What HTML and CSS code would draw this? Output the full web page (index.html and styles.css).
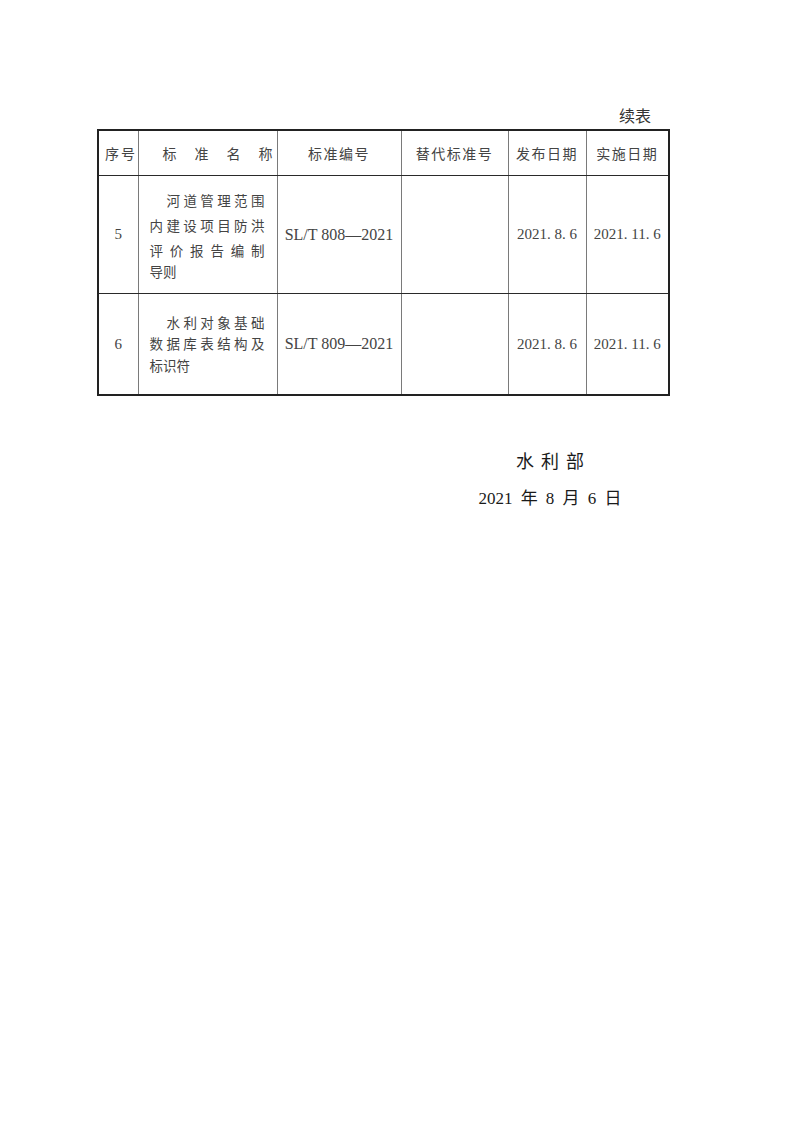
FILE: index.html
```html
<!DOCTYPE html>
<html lang="zh-CN">
<head>
<meta charset="utf-8">
<title>续表</title>
<link rel="stylesheet" href="styles.css">
</head>
<body>
<div class="page">
  <div class="caption">续表</div>
  <table class="std">
    <colgroup>
      <col class="c1"><col class="c2"><col class="c3"><col class="c4"><col class="c5"><col class="c6">
    </colgroup>
    <tr class="head">
      <td class="h-no">序号</td>
      <td class="h-name">标准名称</td>
      <td class="h">标准编号</td>
      <td class="h">替代标准号</td>
      <td class="h">发布日期</td>
      <td class="h">实施日期</td>
    </tr>
    <tr class="r5">
      <td class="num">5</td>
      <td class="name">
        <span class="ln j first tall">河道管理范围</span>
        <span class="ln j tall">内建设项目防洪</span>
        <span class="ln j tall">评价报告编制</span>
        <span class="ln last">导则</span>
      </td>
      <td class="code">SL/T 808—2021</td>
      <td></td>
      <td class="date">2021. 8. 6</td>
      <td class="date">2021. 11. 6</td>
    </tr>
    <tr class="r6">
      <td class="num">6</td>
      <td class="name">
        <span class="ln j first">水利对象基础</span>
        <span class="ln j">数据库表结构及</span>
        <span class="ln">标识符</span>
      </td>
      <td class="code">SL/T 809—2021</td>
      <td></td>
      <td class="date">2021. 8. 6</td>
      <td class="date">2021. 11. 6</td>
    </tr>
  </table>
  <div class="sign">
    <div class="org">水利部</div>
    <div class="when">2021 年 8 月 6 日</div>
  </div>
</div>
</body>
</html>
```

FILE: styles.css
```css
html, body {
  margin: 0;
  padding: 0;
  background: #ffffff;
}

body {
  color: #222;
  font-family: "Liberation Serif", "Noto Sans CJK SC", serif;
}

.page {
  padding: 105px 0 0 97px;
  width: 571px;
}

.caption {
  font-size: 16px;
  line-height: 20px;
  text-align: right;
  padding-right: 17px;
  margin-bottom: 4px;
  font-family: "Noto Sans CJK SC", sans-serif;
  color: #333;
}

.std {
  border-collapse: collapse;
  table-layout: fixed;
  width: 571px;
  border: 2px solid #222;
}

.c1 { width: 40px; }
.c2 { width: 139px; }
.c3 { width: 124px; }
.c4 { width: 107px; }
.c5 { width: 78px; }
.c6 { width: 83px; }

.std td {
  border-left: 1px solid #7a7a7a;
  border-right: 1px solid #7a7a7a;
  border-top: 1px solid #2a2a2a;
  border-bottom: 1px solid #2a2a2a;
  padding: 0;
  vertical-align: middle;
  text-align: center;
  color: #444;
  white-space: nowrap;
}

.head td {
  height: 44px;
  font-family: "Noto Sans CJK SC", sans-serif;
  font-size: 14px;
  letter-spacing: 1.5px;
}

.head .h-no {
  text-align: left;
  padding-left: 6px;
  letter-spacing: 2px;
}

.head .h-name {
  text-align: left;
  padding-left: 24px;
  letter-spacing: 18px;
}

.r5 td { height: 117px; }
.r6 td { height: 100px; }

.num {
  font-size: 15px;
}

.std .name {
  padding: 0 12px 0 11px;
  font-family: "Noto Sans CJK SC", sans-serif;
  font-size: 13.5px;
  white-space: normal;
}

.ln {
  display: block;
  line-height: 21.5px;
  text-align: left;
}

.ln.j {
  text-align: justify;
  text-align-last: justify;
}

.ln.first {
  text-indent: 17px;
}

.ln.tall {
  line-height: 25px;
}

.r5 .ln.last {
  line-height: 17.5px;
}

.code {
  font-size: 16px;
}

.date {
  font-size: 15px;
}

.sign {
  width: 200px;
  margin: 52px 0 0 353px;
  text-align: center;
  color: #1a1a1a;
}

.org {
  font-family: "Noto Sans CJK SC", sans-serif;
  font-size: 18px;
  line-height: 24px;
  letter-spacing: 7px;
  padding-left: 7px;
}

.when {
  margin-top: 15px;
  font-size: 17px;
  line-height: 24px;
  word-spacing: 4px;
}
```
